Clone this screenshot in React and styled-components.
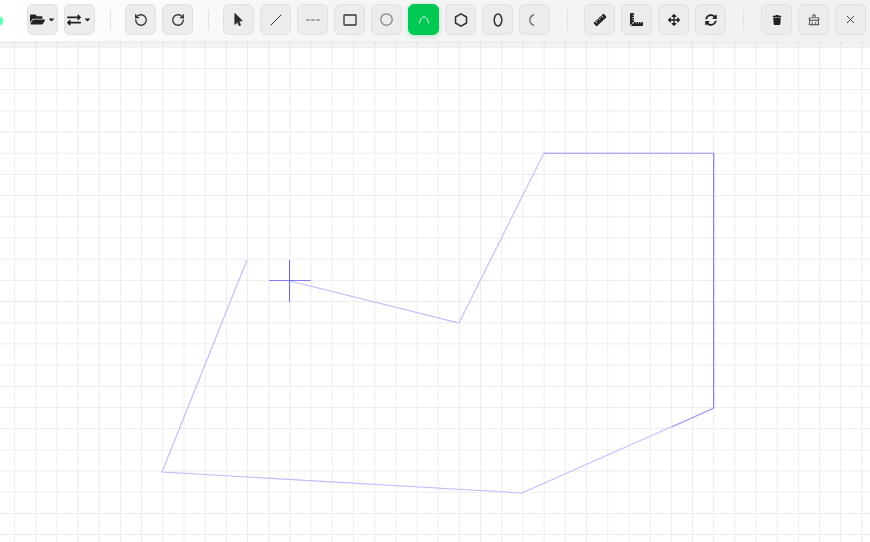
import React from "react";
import styled, { createGlobalStyle } from "styled-components";
import {
    FaFolderOpen,
    FaCaretDown,
    FaExchangeAlt,
    FaMousePointer,
    FaRulerCombined,
    FaRuler,
    FaArrowsAlt,
    FaSyncAlt,
    FaTrash,
    FaRegCircle
} from "react-icons/fa";
import { AiOutlineClear } from "react-icons/ai";
import { RotateCcw, RotateCw, X } from "lucide-react";

const GlobalStyle = createGlobalStyle`
    html, body {
        margin: 0;
        height: 100%;
        overflow: hidden;
        font-family: "Inter", "Liberation Sans", sans-serif;
        background: #fff;
    }
    #root {
        height: 100%;
    }
`;

const PageStyled = styled.div`
    display: flex;
    flex-direction: column;
    height: 542px;
    width: 870px;
    overflow: hidden;
`;

const ToolbarStyled = styled.div`
    position: relative;
    z-index: 2;
    display: flex;
    align-items: center;
    flex: none;
    height: 41px;
    padding-bottom: 2px;
    box-sizing: border-box;
    background: linear-gradient(to right, #ffffff 0%, #f6f6f6 35%, #f1f1f1 100%);

    &::after {
        content: "";
        position: absolute;
        top: 100%;
        left: 0;
        right: 0;
        height: 6px;
        background: linear-gradient(
            to bottom,
            rgba(0, 0, 0, 0.07),
            rgba(0, 0, 0, 0.035)
        );
    }
`;

const StatusDotStyled = styled.span`
    flex: none;
    width: 6px;
    height: 8px;
    margin: 2px 24px 0 -3px;
    border-radius: 50%;
    background: #5cfdb0;
    box-shadow: 0 0 3px #9dffd2;
`;

const GroupStyled = styled.div`
    display: flex;
    gap: 6px;
`;

const SeparatorStyled = styled.span`
    flex: none;
    width: 1px;
    height: 20px;
    margin: 0 ${(p) => p.$right || 14}px 0 ${(p) => p.$left || 15}px;
    background: #e2e2e2;
`;

const ToolButton = styled.button`
    display: flex;
    align-items: center;
    justify-content: center;
    gap: 2px;
    width: 31px;
    height: 31px;
    padding: 0;
    box-sizing: border-box;
    border-radius: 6px;
    border: 1px solid ${(p) => (p.$active ? "#00c853" : "#e0e0e0")};
    background: ${(p) => (p.$active ? "#00c853" : "#ececec")};
    color: ${(p) => (p.$active ? "#e6fff0" : "#333")};
    box-shadow: ${(p) =>
        p.$active ? "0 1px 5px rgba(0, 200, 83, 0.3)" : "none"};
`;

const TiltedIcon = styled.span`
    display: flex;
    transform: rotate(-14deg);
`;

const CanvasStyled = styled.div`
    position: relative;
    flex: 1;
    background-color: #fff;
    background-image:
        linear-gradient(to right, #ececec 1.2px, transparent 1.2px),
        linear-gradient(to bottom, #ececec 1.2px, transparent 1.2px);
    background-size: 21.2px 21.2px;
    background-position: 14px 5.8px;
`;

const DrawingStyled = styled.svg`
    position: absolute;
    top: 0;
    left: 0;
    width: 100%;
    height: 100%;
`;

const Glyph = ({ children, size = 16, width = 1.3 }) => (
    <svg
        width={size}
        height={size}
        viewBox="0 0 16 16"
        fill="none"
        stroke="currentColor"
        strokeWidth={width}
        strokeLinecap="round"
        strokeLinejoin="round"
    >
        {children}
    </svg>
);

const drawTools = [
    { id: "select", icon: <FaMousePointer size={13} color="#2b2b2b" /> },
    {
        id: "line",
        icon: (
            <Glyph width={1}>
                <path d="M3 13 13 3" />
            </Glyph>
        )
    },
    {
        id: "dash",
        icon: (
            <Glyph width={1}>
                <path d="M1.5 8h3M6.500 8h3M11.500 8h3" stroke="#666" />
            </Glyph>
        )
    },
    {
        id: "rect",
        icon: (
            <Glyph>
                <rect x="2" y="3" width="12" height="10" rx="0.5" />
            </Glyph>
        )
    },
    {
        id: "circle",
        icon: <FaRegCircle size={13} color="#808080" />
    },
    {
        id: "arc",
        active: true,
        icon: (
            <Glyph width={1}>
                <path d="M3.500 11C4.500 6.500 6 5 8 5s3.500 1.500 4.500 6" />
            </Glyph>
        )
    },
    {
        id: "polygon",
        icon: (
            <Glyph width={1.5}>
                <path d="M8 1.800 13.500 5v6L8 14.200 2.500 11V5z" />
            </Glyph>
        )
    },
    {
        id: "ellipse",
        icon: (
            <Glyph width={1.5}>
                <ellipse cx="8" cy="8" rx="3.800" ry="6" />
            </Glyph>
        )
    },
    {
        id: "crescent",
        icon: (
            <Glyph>
                <path d="M6.500 2.800C4 4 2.800 6 2.800 8s1.200 4 3.700 5.200" stroke="#666" />
            </Glyph>
        )
    }
];

const shapeLine = "247,260 162,472 522,493 714,408 714,153 544,153 459,323 290,281";

export default function App() {
    return (
        <PageStyled>
            <GlobalStyle />
            <ToolbarStyled>
                <StatusDotStyled />
                <GroupStyled>
                    <ToolButton>
                        <FaFolderOpen size={15} color="#222" />
                        <FaCaretDown size={9} color="#222" />
                    </ToolButton>
                    <ToolButton>
                        <FaExchangeAlt size={14} color="#222" />
                        <FaCaretDown size={9} color="#222" />
                    </ToolButton>
                </GroupStyled>
                <SeparatorStyled />
                <GroupStyled>
                    <ToolButton>
                        <RotateCcw size={14} strokeWidth={2.3} />
                    </ToolButton>
                    <ToolButton>
                        <RotateCw size={14} strokeWidth={2.3} />
                    </ToolButton>
                </GroupStyled>
                <SeparatorStyled />
                <GroupStyled>
                    {drawTools.map((tool) => (
                        <ToolButton key={tool.id} $active={tool.active}>
                            {tool.icon}
                        </ToolButton>
                    ))}
                </GroupStyled>
                <SeparatorStyled $left={17} $right={16} />
                <GroupStyled>
                    <ToolButton>
                        <TiltedIcon>
                            <FaRuler size={14} color="#222" />
                        </TiltedIcon>
                    </ToolButton>
                    <ToolButton>
                        <FaRulerCombined size={13} color="#222" />
                    </ToolButton>
                    <ToolButton>
                        <FaArrowsAlt size={12} color="#222" />
                    </ToolButton>
                    <ToolButton>
                        <FaSyncAlt size={12} color="#222" />
                    </ToolButton>
                </GroupStyled>
                <SeparatorStyled $left={17} $right={17} />
                <GroupStyled>
                    <ToolButton>
                        <FaTrash size={10} color="#222" />
                    </ToolButton>
                    <ToolButton>
                        <AiOutlineClear size={14} color="#444" />
                    </ToolButton>
                    <ToolButton>
                        <X size={13} strokeWidth={1.8} color="#444" />
                    </ToolButton>
                </GroupStyled>
            </ToolbarStyled>
            <CanvasStyled>
                <DrawingStyled>
                    <g transform="translate(0,-41)" fill="none">
                        <polyline
                            points={shapeLine}
                            stroke="#c2b9fc"
                            strokeWidth="1.1"
                        />
                        <path d="M544 153.500H714" stroke="#b0abec" />
                        <path d="M713.500 153V408" stroke="#8f84f4" />
                        <path d="M672 427 714 408" stroke="#9d93f8" />
                        <path d="M269 280.500H311" stroke="#7f7ff0" />
                        <path d="M289.500 260V302" stroke="#6a6ad8" />
                    </g>
                </DrawingStyled>
            </CanvasStyled>
        </PageStyled>
    );
}
